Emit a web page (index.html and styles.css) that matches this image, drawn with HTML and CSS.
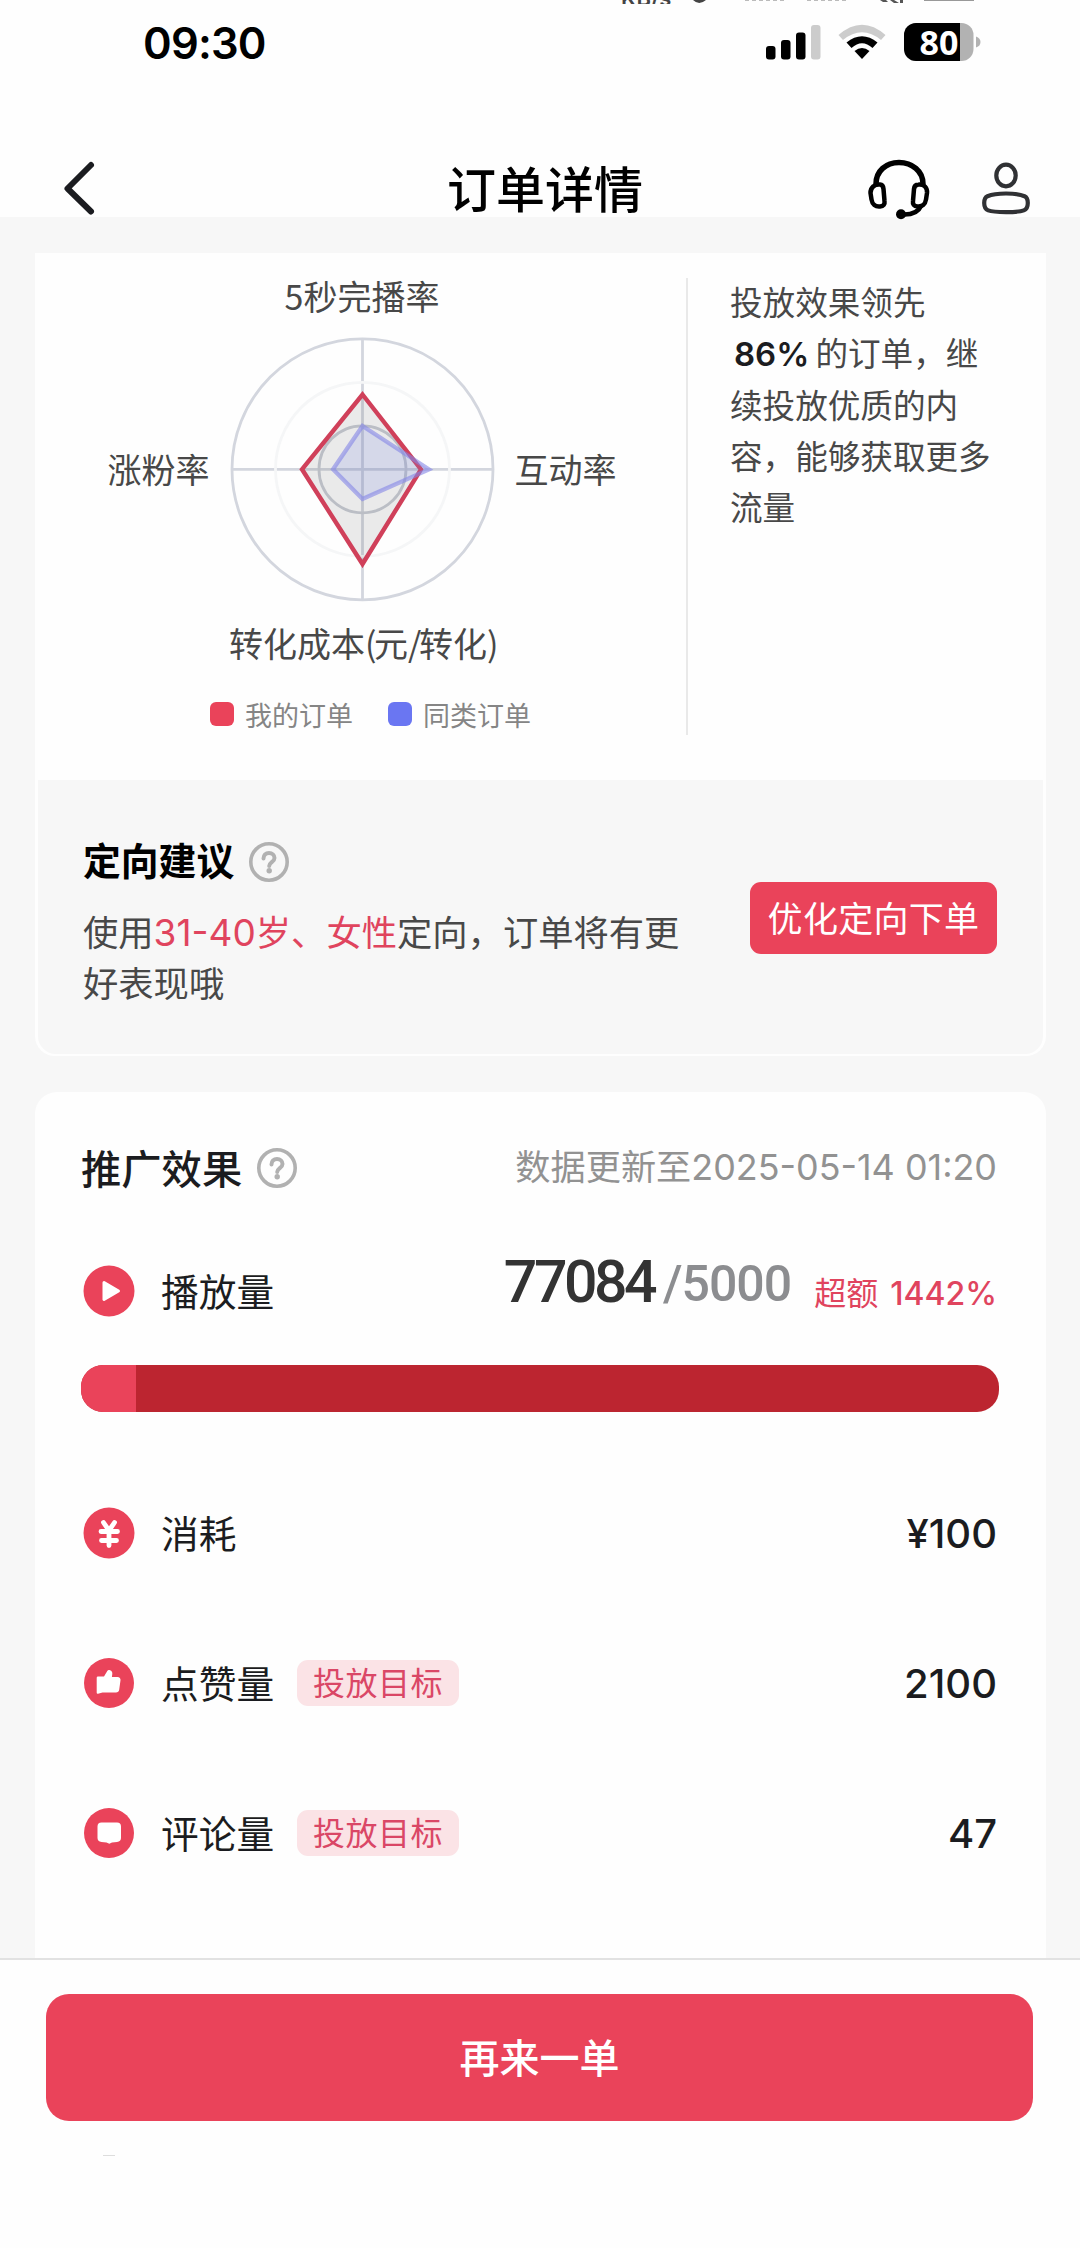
FILE: index.html
```html
<!DOCTYPE html>
<html lang="zh-CN">
<head>
<meta charset="utf-8">
<title>订单详情</title>
<link rel="stylesheet" href="styles.css">
</head>
<body>
<div class="page">
  <header class="top">
    <div class="sliver" aria-hidden="true">
      <span class="sliver-text">KB/s</span>
      <svg class="sliver-marks" width="400" height="4" viewBox="680 0 400 4">
        <path d="M693 0q6 6 13 0z" fill="#444"/>
        <path d="M745 0h40M807 0h42" stroke="#bbb" stroke-width="2" stroke-dasharray="4 3"/>
        <path d="M880 0h6l2 2h-5zM890 0h4l5 3h-5zM900 0h3v3h-3z" fill="#555"/>
        <path d="M924 0h50" stroke="#999" stroke-width="2"/>
      </svg>
    </div>
    <div class="status">
      <span class="clock">09:30</span>
      <svg class="status-icons" width="216" height="40" viewBox="766 22 216 40">
        <g fill="#000">
          <rect x="766" y="46" width="9.5" height="13.5" rx="3"/>
          <rect x="781" y="40" width="9.5" height="19.5" rx="3"/>
          <rect x="796" y="32.500" width="9.500" height="27" rx="3"/>
          <rect x="811" y="25" width="9.5" height="34.500" rx="3" fill="#ccc"/>
        </g>
        <path d="M838.500 35Q862 14.500 885.500 35L881 40Q862 24.500 843 40Z" fill="#ccc"/>
        <path d="M846.500 42.500Q862 30 877.500 42.500L872.500 48Q862 38.500 851.500 48Z" fill="#000"/>
        <path d="M854.500 51Q862 45 869.500 51L862 59Z" fill="#000"/>
        <rect x="904" y="23" width="69.500" height="38" rx="12" fill="#b2b2b2"/>
        <path d="M960 23H916a12 12 0 0 0-12 12v14a12 12 0 0 0 12 12h44z" fill="#000"/>
        <path d="M976 36.500q4.500 1.500 4.500 5.500t-4.500 5.500z" fill="#b2b2b2"/>
        <text class="battery" x="939" y="54.500" text-anchor="middle">80</text>
      </svg>
    </div>
    <nav class="nav">
      <svg class="back" width="40" height="56" viewBox="60 160 40 56" fill="none" stroke="#1b1c20" stroke-width="6" stroke-linecap="round" stroke-linejoin="round"><path d="M91 165L67.500 188.500L91 211.500"/></svg>
      <h1 class="nav-title">订单详情</h1>
      <svg class="actions" width="166" height="60" viewBox="868 160 166 60" fill="none" stroke="#000" stroke-width="5.5" stroke-linecap="round" stroke-linejoin="round">
        <path d="M878 184C878 171 888 162.500 901 162.500S925 171 925 184"/>
        <path d="M882 184.500c-5.500-.5-9.500 3-9.500 8.500l1 6.500c.8 5 4 7.500 8.500 7 3.500-.3 5-2.500 4.500-5.500l-1-12c-.2-2.500-1-4.300-3.500-4.500Z" stroke-width="4.500"/>
        <path d="M920.500 184.500c5.500-.5 9 3 8.500 8.500l-1 6.500c-.8 5-4 7.500-8.500 7-3.500-.3-5-2.500-4.500-5.500l1-12c.2-2.500 1.500-4.300 4.500-4.500Z" stroke-width="4.500"/>
        <path d="M923 206q-4 9-18 8.500" stroke-width="4.500"/>
        <circle cx="903" cy="214.200" r="5" fill="#000" stroke="none"/>
        <g stroke="#303134" stroke-width="4.200">
          <ellipse cx="1008" cy="175.500" rx="9.700" ry="10.800"/>
          <path d="M1008 193.500c9 0 15 1.200 18.500 2.700 2.500 1.200 3.300 2.800 3.300 6.800s-.8 6.200-4 7.400c-3.500 1.300-9 1.700-17.800 1.700s-14.300-.4-17.800-1.700c-3.200-1.200-4-3.400-4-7.400s.8-5.600 3.300-6.800c3.500-1.500 9.500-2.700 18.500-2.700Z"/>
        </g>
      </svg>
    </nav>
  </header>

  <main class="content">
    <section class="card compare">
      <div class="analysis">
        <div class="chart">
          <svg class="radar" width="651" height="434" viewBox="35 253 651 434">
            <g fill="none" stroke="#d3d6de" stroke-width="2.800">
              <circle cx="362.500" cy="469.300" r="130.500"/>
              <path d="M362.500 339V600M232 469.300H493"/>
              <circle cx="362.500" cy="469.300" r="87" stroke="#f5f6f7"/>
              <circle cx="362.500" cy="469.300" r="43.500" stroke="#c9cdd5"/>
            </g>
            <path d="M362.500 394.500L421 469.300L362.500 564L302 469.300Z" fill="#464646" fill-opacity=".11" stroke="#d0405a" stroke-width="4.400"/>
            <path d="M362.500 426L429 469.300L362.500 499L333 469.300Z" fill="#7c8ce8" fill-opacity=".18" stroke="#8486e6" stroke-opacity=".6" stroke-width="4.200"/>
            <g class="axis" text-anchor="middle">
              <text x="362" y="310">5秒完播率</text>
              <text x="158.500" y="483">涨粉率</text>
              <text x="565.500" y="483">互动率</text>
              <text x="362.500" y="656.500">转化成本<tspan class="tight">(</tspan>元<tspan class="tight">/</tspan>转化<tspan class="tight">)</tspan></text>
            </g>
          </svg>
          <div class="legend">
            <span class="legend-item"><i class="swatch mine"></i>我的订单</span>
            <span class="legend-item"><i class="swatch peer"></i>同类订单</span>
          </div>
        </div>
        <p class="summary">投放效果领先<br><b>86%</b>的订单，继<br>续投放优质的内<br>容，能够获取更多<br>流量</p>
      </div>
      <div class="advice">
        <div class="advice-body">
          <div class="advice-head">
            <h2 class="advice-title">定向建议</h2>
            <svg class="help" width="42" height="42" viewBox="0 0 42 42" fill="none" stroke="#b1b1b1" stroke-width="3.600"><circle cx="21" cy="21" r="18.200"/><path d="M15.500 17.500c0-3.400 2.300-5.500 5.500-5.500s5.500 2 5.500 5c0 4-5.300 4.200-5.300 8" stroke-width="4" stroke-linecap="round"/><circle cx="21.200" cy="29.800" r="2.700" fill="#b1b1b1" stroke="none"/></svg>
          </div>
          <p class="advice-text">使用<em><span class="age">31-40</span>岁、女性</em>定向，订单将有更<br>好表现哦</p>
        </div>
        <button class="optimize">优化定向下单</button>
      </div>
    </section>

    <section class="card effect">
      <div class="effect-head">
        <h2 class="effect-title">推广效果</h2>
        <svg class="help" width="42" height="42" viewBox="0 0 42 42" fill="none" stroke="#b1b1b1" stroke-width="3.600"><circle cx="21" cy="21" r="18.200"/><path d="M15.500 17.500c0-3.400 2.300-5.500 5.500-5.500s5.500 2 5.500 5c0 4-5.300 4.200-5.300 8" stroke-width="4" stroke-linecap="round"/><circle cx="21.200" cy="29.800" r="2.700" fill="#b1b1b1" stroke="none"/></svg>
        <span class="updated">数据更新至<span class="stamp">2025-05-14 01:20</span></span>
      </div>
      <div class="row plays">
        <svg class="icon" width="52" height="52" viewBox="0 0 52 52"><circle cx="26" cy="26" r="25.500" fill="#ea435a"/><path d="M21 17.500L35.500 26L21 34.500Z" fill="#fff" stroke="#fff" stroke-width="3" stroke-linejoin="round"/></svg>
        <span class="label">播放量</span>
        <span class="count">77084</span><span class="goal">/5000</span>
        <span class="excess">超额 <span class="excess-num">1442%</span></span>
      </div>
      <div class="bar"><div class="bar-base" style="width:6%"></div></div>
      <div class="rows">
        <div class="row">
          <svg class="icon" width="52" height="52" viewBox="0 0 52 52"><circle cx="26" cy="26" r="25.500" fill="#ea435a"/><path d="M20.500 15.500L26 23.500L31.500 15.500M26 24V38.500M18 24.500H34.500M18.500 33.500H33.500" fill="none" stroke="#fff" stroke-width="4.800" stroke-linecap="round"/></svg>
          <span class="label">消耗</span><span class="value">¥100</span>
        </div>
        <div class="row">
          <svg class="icon" width="52" height="52" viewBox="0 0 52 52"><circle cx="26" cy="26" r="25" fill="#ea435a"/><path d="M15 19.500h6l3-5c.5-1.200 1.800-1.800 3-1.300 1.800.6 2.500 2 2.300 3.800l-.4 3h5.600c2 0 3.300 1.300 3 3.300l-1.300 9.500c-.3 1.800-1.500 2.700-3.200 2.700H19.500l-4.500 1.200c-.8.200-1.300-.2-1.300-1V21c0-1 .5-1.500 1.300-1.500Z" fill="#fff"/></svg>
          <span class="label">点赞量</span><span class="tag">投放目标</span><span class="value">2100</span>
        </div>
        <div class="row">
          <svg class="icon" width="52" height="52" viewBox="0 0 52 52"><circle cx="26" cy="26" r="25" fill="#ea435a"/><path d="M18.500 15.500h15.500q4 0 4 4v11.500q0 3.500-4 4l-5 .5-2.700 1.300-2.800-1.300-5-.5q-4-.5-4-4V19.500q0-4 4-4Z" fill="#fff"/></svg>
          <span class="label">评论量</span><span class="tag">投放目标</span><span class="value">47</span>
        </div>
      </div>
    </section>
  </main>

  <footer class="footer">
    <button class="again">再来一单</button>
    <i class="mark"></i>
  </footer>
</div>
</body>
</html>
```
FILE: styles.css
```css
* { box-sizing: border-box; }
body {
  margin: 0;
  background: #fff;
  font-family: Inter, "Noto Sans CJK SC", sans-serif;
  color: #1b1c20;
}
h1, h2, p { margin: 0; }
button { border: 0; padding: 0; font-family: inherit; color: #fff; background: #ea435a; }
svg { display: block; flex: none; overflow: visible; }

.page { width: 1080px; height: 2248px; display: flex; flex-direction: column; overflow: hidden; background: #fefefe; }

/* status bar and navigation */
.top { position: relative; z-index: 1; height: 217px; flex: none; background: #fefefe; }
.sliver { display: flex; align-items: flex-end; height: 4px; overflow: hidden; padding-left: 621px; }
.sliver-text { width: 59px; height: 16px; font-size: 22px; line-height: 20px; font-weight: 600; color: #444; }
.status { display: flex; height: 110px; padding-left: 143px; }
.clock { width: 623px; margin-top: 15px; font-size: 43.500px; font-weight: 600; line-height: 48px; letter-spacing: -.8px; color: #000; }
.status-icons { margin-top: 18px; }
.battery { font: 700 34px "Noto Sans", sans-serif; fill: #fff; }
.nav { display: flex; height: 103px; padding: 46px 48px 0 60px; }
.nav-title { margin: 3px 0 0 347px; font-size: 49px; line-height: 56px; font-weight: 500; color: #000; }
.actions { margin-left: auto; }

/* scrolling content */
.content { height: 1741px; flex: none; padding: 36px 34px 0 35px; background: #f7f7f7; display: flex; flex-direction: column; gap: 36px; }
.card { background: #fefefe; flex: none; }
.compare { height: 803px; border-radius: 0 0 20px 20px; }
.analysis { display: flex; height: 527px; }
.chart { width: 651px; }
.axis { font-size: 34px; fill: #484848; font-family: "Noto Sans CJK SC", sans-serif; }
.tight { letter-spacing: -2.500px; }
.legend { display: flex; gap: 35px; height: 54px; padding-left: 175px; align-items: center; font-size: 27px; color: #858585; }
.legend-item { display: flex; align-items: center; gap: 11px; }
.swatch { width: 24px; height: 24px; border-radius: 6px; }
.mine { background: #ea435a; }
.peer { background: #6a76f2; }
.summary { margin-top: 25px; height: 457px; border-left: 2px solid #e9e9e9; padding-left: 42px; font-size: 32.600px; line-height: 51.300px; color: #484848; white-space: nowrap; }
.summary b { font-weight: 600; color: #1b1c20; margin: 0 6px 0 4px; font-size: 33px; }

.advice { display: flex; justify-content: space-between; height: 274px; margin: 0 3px; padding: 0 46px 0 45px; background: #f7f7f7; border-radius: 0 0 18px 18px; }
.advice-head { display: flex; align-items: center; gap: 14px; height: 42px; margin-top: 61px; }
.advice-title { margin-top: -3px; font-size: 37.800px; line-height: 42px; font-weight: 600; color: #000; }
.advice-text { margin-top: 24px; font-size: 35.300px; line-height: 51px; color: #484848; white-space: nowrap; }
.advice-text em { font-style: normal; color: #e0445e; }
.age { font-size: 37px; }
.optimize { width: 247px; height: 72px; margin-top: 102px; padding-top: 2px; border-radius: 11px; font-size: 35px; line-height: 70px; letter-spacing: .3px; }

.effect { flex: 1; border-radius: 22px 22px 0 0; padding: 0 47px 0 46px; }
.effect-head { display: flex; align-items: center; height: 152px; }
.effect-title { margin: 3px 14px 0 0; font-size: 40.300px; line-height: 48px; font-weight: 500; }
.updated { margin: -2px 0 0 auto; padding-right: 2px; font-size: 35.200px; line-height: 48px; color: #929292; white-space: nowrap; }
.stamp { font-size: 35.900px; }
.row { display: flex; align-items: center; height: 150px; padding: 0 2px; white-space: nowrap; }
.plays { height: 94px; }
.label { margin: 2px 0 0 26px; font-size: 37.700px; line-height: 44px; }
.value { margin-left: auto; font-size: 40px; font-weight: 500; }
.tag { margin-left: 23px; width: 162px; height: 46px; padding-top: 2px; border-radius: 11px; background: #fbe3e6; color: #da4766; font-size: 32px; line-height: 44px; letter-spacing: .5px; text-align: center; }
.count { margin: -18px 0 0 auto; font: 500 59px/60px Roboto, sans-serif; letter-spacing: -3.500px; color: #333; }
.goal { margin: -14px 0 0 9px; font: 500 50px/60px Roboto, sans-serif; letter-spacing: -1px; color: #8c8d90; }
.excess { margin-left: 23px; font-size: 32px; color: #e0445e; word-spacing: 3px; }
.excess-num { font-weight: 500; }
.bar { height: 47px; margin-top: 27px; border-radius: 22px; background: #bc2530; overflow: hidden; }
.bar-base { height: 100%; background: #ea435a; }
.rows { margin-top: 46px; }

/* bottom action */
.footer { flex: 1; border-top: 2px solid #e2e2e2; padding: 34px 47px 0 46px; }
.again { display: block; width: 100%; height: 127px; padding-top: 3px; border-radius: 23px; font-size: 40px; line-height: 124px; font-weight: 500; }
.mark { display: block; width: 12px; height: 1px; margin: 34px 0 0 57px; background: #ddd; }
```
